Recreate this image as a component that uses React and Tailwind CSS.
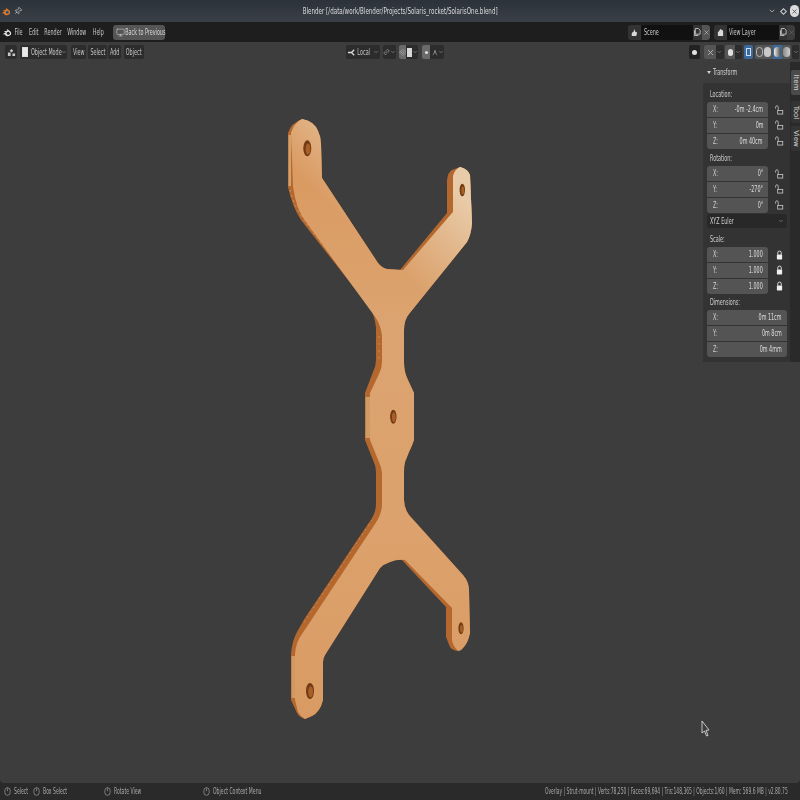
import { ChevronDown, X, Link2, Magnet, Monitor, Pin, Mouse } from "lucide-react";

// text in the shot is squeezed horizontally, so every label gets an x scale
function T({ children, className = "", title }) {
  return <span className={`inline-block shrink-0 whitespace-nowrap font-['DejaVu_Sans',sans-serif] leading-none ${title ? "scale-x-[0.62]" : "scale-x-[0.54]"} ${className}`}>{children}</span>;
}

function Logo({ color, eye, className }) {
  return (
    <svg viewBox="0 0 12 12" className={className}>
      <path d="M0.5 7.5 L4 5.2 L1.5 5 L2 4 L6 4 L4.6 2.6 L6 1.8 L9.5 4.2 C11.5 5.6 11.5 9 8.6 10.4 C6 11.6 3 10.6 2.6 8.2 L1 9 Z" fill={color} />
      <circle cx="7" cy="7" r="2" fill={eye} />
    </svg>
  );
}

function CopyIcon() {
  return (
    <svg viewBox="0 0 8 10" className="h-[10px] w-[7px]">
      <path d="M1.5 1 L5 1 L7 3 L7 7.5 L1.5 7.5 Z M0.5 3 L0.5 9 L5 9" stroke="#dcdcdc" strokeWidth="0.9" fill="none" />
    </svg>
  );
}

function LockIcon({ locked }) {
  if (locked) {
    return (
      <svg viewBox="0 0 8 11" className="h-[10px] w-[7px]">
        <path d="M2 5 L2 3 Q2 1 4 1 Q6 1 6 3 L6 5" stroke="#f0f0f0" strokeWidth="1" fill="none" />
        <rect x="1" y="5" width="6" height="5.5" rx="0.6" fill="#f0f0f0" />
      </svg>
    );
  }
  return (
    <svg viewBox="0 0 10 11" className="h-[10px] w-[9px]">
      <path d="M0.6 4 L0.6 2.6 Q0.6 0.8 2.2 0.8 Q3.6 0.8 3.6 2.6 L3.6 6" stroke="#c8c8c8" strokeWidth="0.9" fill="none" />
      <rect x="3" y="6" width="5.6" height="4" stroke="#c8c8c8" strokeWidth="0.9" fill="none" />
    </svg>
  );
}

function Menu({ w, label }) {
  return (
    <div className={`flex justify-center ${w}`}>
      <T className="text-[9px] text-[#c8c8c8] origin-center">{label}</T>
    </div>
  );
}

function HeadBtn({ w, label, children }) {
  return (
    <div className={`flex h-[14px] items-center justify-center rounded-[2px] bg-[#2c2c2c] ${w}`}>
      {children}
      {label && <T className="text-[9px] text-[#c4c4c4] origin-center">{label}</T>}
    </div>
  );
}

function Caret() {
  return <ChevronDown size={6} strokeWidth={2} className="shrink-0 text-[#a8a8a8]" />;
}

function Field({ axis, value, first, last }) {
  return (
    <div className={`flex h-[15px] items-center bg-[#545454] pl-[6px] pr-[5px] ${first ? "rounded-t-[3px]" : ""} ${last ? "rounded-b-[3px]" : "mb-px"}`}>
      <div className="flex w-[6px]">
        <T className="text-[9px] text-[#d0d0d0] origin-left">{axis}</T>
      </div>
      <div className="flex min-w-0 flex-1 justify-end">
        <T className="text-[9px] text-[#dedede] origin-right">{value}</T>
      </div>
    </div>
  );
}

function Group({ rows, locked, wide }) {
  return (
    <div className="flex">
      <div className={wide ? "w-[80px]" : "w-[61px]"}>
        {rows.map((r, i) => (
          <Field key={r[0]} axis={r[0]} value={r[1]} first={i === 0} last={i === 2} />
        ))}
      </div>
      {!wide && (
        <div className="ml-[5px] flex w-[12px] flex-col justify-around">
          {rows.map((r) => (
            <div key={r[0]} className="flex h-[15px] items-center justify-center">
              <LockIcon locked={locked} />
            </div>
          ))}
        </div>
      )}
    </div>
  );
}

function Label({ text, className }) {
  return (
    <div className={`flex h-[10px] items-center pl-[3px] ${className}`}>
      <T className="text-[9px] text-[#d0d0d0] origin-left">{text}</T>
    </div>
  );
}

function SideTab({ label, className }) {
  return (
    <div className={`flex w-[9px] items-center justify-center rounded-l-[2px] ${className}`}>
      <span className="inline-block shrink-0 rotate-90 whitespace-nowrap font-['DejaVu_Sans',sans-serif] text-[7px] leading-none text-[#d8d8d8]">{label}</span>
    </div>
  );
}

function Sphere({ className }) {
  return <div className={`h-[10px] w-[7px] rounded-full ${className}`} />;
}

function StatusItem({ w, label }) {
  return (
    <div className={`flex items-center ${w}`}>
      <Mouse size={9} strokeWidth={1.5} className="shrink-0 text-[#b8b8b8]" />
      <T className="ml-[2px] text-[8.5px] text-[#a8a8a8] origin-left">{label}</T>
    </div>
  );
}

// right hand outline is shared by the silhouette and the face down to the lower lug
const UPPER_RIGHT =
  "Q314 121 318 131 Q321 137 321 144 L322 178 L378 263 Q382 268 387 269 L";
const MIDDLE_RIGHT =
  "Q468 169 470 175 L472 223 Q471 235 467 242 L409 314 Q404 320 404 330 L404 362 Q404 372 408 380 L414 393 L414 440 Q412 446 409 452 L405 462 Q404 466 404 472 L404 500 Q404 508 409 515 L463 575 Q469 582 469 590 L470 633 Q468 643 463 648 Q461 651 458 651";
const LOWER_INNER = "Q397 559 390 562 Q384 564 380 568 L325 655 Q323 658 323 662 L323 700 Q320 712 312 716 L305 719";

const OUTLINE = `M288 133 Q291 123 302 119 ${UPPER_RIGHT}400 270 L447 213 L447 180 Q448 172 452 170 L460 167 ${MIDDLE_RIGHT} Q452 650 450 647 L446 637 L446 607 L402 560 ${LOWER_INNER} Q299 717 297 713 L291 700 L291 654 Q292 641 297 632 L305 618 L368 524 Q376 514 376 504 L376 472 Q376 466 373 460 L365 440 L365 393 L373 372 Q376 366 376 360 L376 328 Q375 316 370 308 L301 220 Q292 206 288 187 Z`;

const FACE = `M291 133 Q294 123 302 119 ${UPPER_RIGHT}403 270 L453 212 L453 177 Q454 170 460 167 ${MIDDLE_RIGHT} Q453 646 452 640 L452 608 L405 560 ${LOWER_INNER} Q301 717 298 712 L295 700 L295 654 Q296 642 302 634 L310 622 L375 524 Q382 514 382 504 L382 474 Q382 468 379 462 L370 440 L370 393 L379 374 Q382 368 382 362 L382 336 Q381 326 376 318 L306 222 Q296 210 293 186 Z`;

function Strut() {
  return (
    <svg viewBox="0 0 800 800" className="absolute left-0 top-[-42px] h-[800px] w-[800px]">
      <defs>
        <linearGradient id="face" gradientUnits="userSpaceOnUse" x1="390" y1="120" x2="390" y2="720">
          <stop offset="0" stopColor="#d9975d" />
          <stop offset="0.35" stopColor="#dca470" />
          <stop offset="0.7" stopColor="#dca16c" />
          <stop offset="1" stopColor="#d99b63" />
        </linearGradient>
        <linearGradient id="sheen" gradientUnits="userSpaceOnUse" x1="405" y1="275" x2="470" y2="205">
          <stop offset="0" stopColor="#e8cba8" stopOpacity="0" />
          <stop offset="1" stopColor="#e8cba8" stopOpacity="1" />
        </linearGradient>
        <filter id="soft">
          <feGaussianBlur stdDeviation="0.5" />
        </filter>
      </defs>
      <g filter="url(#soft)">
        {/* silhouette, shows as the cut edge of the plate */}
        <path fill="#b5682f" d={OUTLINE} />
        {/* light worn patches and grain on the edge */}
        <path fill="#d3a06f" d="M288.5 135 L291 135 L291 186 L288.5 186 Z" />
        <path fill="#cf9a66" d="M365.5 397 L370 397 L370 438 L365.5 438 Z" />
        <path fill="#cf9a66" d="M291.5 656 L295 656 L295 698 L291.5 698 Z" />
        <path d="M290 190 Q294 206 303 219 L372 310 L379 322" stroke="#d49a63" strokeWidth="1" strokeDasharray="1.5 4" fill="none" />
        <path d="M372 520 L304 622" stroke="#d08c50" strokeWidth="1" strokeDasharray="1.5 4" fill="none" />
        <path d="M379 336 L379 362" stroke="#c98a52" strokeWidth="1" strokeDasharray="2 5" fill="none" />
        {/* plate face */}
        <path fill="url(#face)" d={FACE} />
        <path fill="url(#sheen)" d={FACE} />
        {/* mounting holes */}
        <ellipse cx="307.3" cy="148.3" rx="4" ry="8" fill="#6f3a14" />
        <ellipse cx="308" cy="149" rx="2.4" ry="5.6" fill="#a85f27" />
        <ellipse cx="462.3" cy="190" rx="2.7" ry="6.3" fill="#6f3a14" />
        <ellipse cx="462.8" cy="190.6" rx="1.5" ry="4" fill="#a85f27" />
        <ellipse cx="393.3" cy="416.7" rx="3.2" ry="7" fill="#6f3a14" />
        <ellipse cx="393.8" cy="417.3" rx="1.9" ry="4.8" fill="#a85f27" />
        <ellipse cx="461" cy="628.3" rx="2.6" ry="6" fill="#6f3a14" />
        <ellipse cx="461.5" cy="628.9" rx="1.4" ry="3.8" fill="#a85f27" />
        <ellipse cx="310" cy="691" rx="4" ry="8" fill="#6f3a14" />
        <ellipse cx="310.6" cy="691.8" rx="2.4" ry="5.6" fill="#a85f27" />
      </g>
      {/* mouse cursor */}
      <path d="M702 721 L702 733 L704.5 731 L706.5 736 L708 735.4 L706 730.4 L709 730 Z" fill="#3d3d3d" stroke="#e8e8e8" strokeWidth="0.8" />
    </svg>
  );
}

export default function App() {
  return (
    <div className="flex h-[800px] w-[800px] flex-col overflow-hidden bg-[#2a2a2a]">
      {/* Window title */}
      <div className="flex h-[22px] shrink-0 items-center bg-gradient-to-b from-[#2b323a] to-[#3b4048] pl-[2px] pr-[1px]">
        <Logo color="#ec7a1c" eye="#24528c" className="h-[11px] w-[9px]" />
        <Pin size={8} strokeWidth={2} className="ml-[3px] rotate-45 text-[#d8d8d8]" />
        <div className="flex flex-1 justify-center pl-[10px]">
          <T title className="text-[9px] text-[#dcdcdc] origin-center">Blender [/data/work/Blender/Projects/Solaris_rocket/SolarisOne.blend]</T>
        </div>
        <ChevronDown size={8} strokeWidth={2} className="text-[#d0d0d0]" />
        <div className="ml-[5px] h-[5px] w-[5px] rotate-45 border border-[#d0d0d0]" />
        <div className="ml-[4px] flex h-[12px] w-[9px] items-center justify-center rounded-full bg-[#dcdcdc]">
          <X size={7} strokeWidth={2.5} className="text-[#3a3f46]" />
        </div>
      </div>

      {/* Top bar */}
      <div className="flex h-[20px] shrink-0 items-center bg-[#1e1e1e] pl-[3px]">
        <Logo color="#e0e0e0" eye="#1e1e1e" className="h-[11px] w-[9px]" />
        <Menu w="ml-[2px] w-[10px]" label="File" />
        <Menu w="ml-[5px] w-[10px]" label="Edit" />
        <Menu w="ml-[5px] w-[18px]" label="Render" />
        <Menu w="ml-[5px] w-[20px]" label="Window" />
        <Menu w="ml-[5px] w-[12px]" label="Help" />
        <div className="ml-[9px] flex h-[15px] w-[52px] items-center rounded-[3px] bg-[#555555] pl-[3px]">
          <Monitor size={9} strokeWidth={1.5} className="shrink-0 text-[#d0d0d0]" />
          <div className="flex w-[40px] justify-center">
            <T className="text-[9px] text-[#d8d8d8] origin-center">Back to Previous</T>
          </div>
        </div>
        <div className="flex-1" />
        {/* Scene */}
        <div className="flex h-[15px] w-[82px] items-center">
          <div className="flex h-full w-[13px] items-center justify-center rounded-l-[3px] bg-[#333333]">
            <svg viewBox="0 0 8 10" className="h-[9px] w-[7px]">
              <path d="M1 9 Q0 5 3 4 L3.5 1 L5 4 L7 5 L6 9 Z" fill="#d8d8d8" />
            </svg>
          </div>
          <div className="flex h-full w-[52px] items-center bg-[#111111] pl-[3px]">
            <T className="text-[9px] text-[#c8c8c8] origin-left">Scene</T>
          </div>
          <div className="flex h-full w-[9px] items-center justify-center bg-[#333333]">
            <CopyIcon />
          </div>
          <div className="flex h-full w-[8px] items-center justify-center rounded-r-[3px] bg-[#545454]">
            <X size={7} strokeWidth={2} className="text-[#c8c8c8]" />
          </div>
        </div>
        {/* View layer */}
        <div className="ml-[4px] mr-[5px] flex h-[15px] w-[81px] items-center">
          <div className="flex h-full w-[13px] items-center justify-center rounded-l-[3px] bg-[#333333]">
            <svg viewBox="0 0 8 10" className="h-[9px] w-[7px]">
              <path d="M1 9 L1 5 L4 1 L7 3 L7 9 Z" fill="#d8d8d8" />
            </svg>
          </div>
          <div className="flex h-full w-[52px] items-center bg-[#111111] pl-[2px]">
            <T className="text-[9px] text-[#c8c8c8] origin-left">View Layer</T>
          </div>
          <div className="flex h-full w-[8px] items-center justify-center bg-[#333333]">
            <CopyIcon />
          </div>
          <div className="flex h-full w-[8px] items-center justify-center rounded-r-[3px] bg-[#3c3c3c]">
            <X size={7} strokeWidth={2} className="text-[#6a6a6a]" />
          </div>
        </div>
      </div>

      {/* 3D viewport */}
      <div className="relative min-h-0 flex-1 overflow-hidden rounded-b-[4px] bg-[#3d3d3d]">
        <Strut />

        {/* Viewport header */}
        <div className="relative flex h-[20px] items-center pl-[5px]">
          <HeadBtn w="w-[12px]">
            <svg viewBox="0 0 10 10" className="h-[9px] w-[9px]">
              <path d="M5 1 L7 3 L5 5 L3 3 Z M1 5 L4 5 L4 9 L1 9 Z M6 6 L9 6 L9 9 L6 9 Z" fill="#c8c8c8" />
            </svg>
          </HeadBtn>
          <div className="ml-[3px] flex h-[14px] w-[47px] items-center rounded-[2px] bg-[#2c2c2c] pl-[2px]">
            <div className="h-[10px] w-[6px] shrink-0 border border-dashed border-[#dcdcdc] bg-[#e8e8e8]" />
            <div className="ml-[3px] flex w-[30px] justify-center">
              <T className="text-[9px] text-[#c8c8c8] origin-center">Object Mode</T>
            </div>
            <Caret />
          </div>
          <HeadBtn w="ml-[4px] w-[15px]" label="View" />
          <HeadBtn w="ml-[2px] w-[19px]" label="Select" />
          <HeadBtn w="ml-px w-[13px]" label="Add" />
          <HeadBtn w="ml-[3px] w-[20px]" label="Object" />

          {/* Transform widgets */}
          <div className="ml-[202px] flex h-[14px] w-[34px] items-center rounded-[2px] bg-[#2c2c2c] pl-[1px]">
            <svg viewBox="0 0 10 10" className="h-[9px] w-[9px] shrink-0">
              <path d="M1 5 L5 5 M5 5 L8 2 M5 5 L8 8" stroke="#dcdcdc" strokeWidth="1.4" fill="none" />
            </svg>
            <div className="flex w-[15px] justify-center">
              <T className="text-[9px] text-[#c8c8c8] origin-center">Local</T>
            </div>
            <div className="ml-[2px]"><Caret /></div>
          </div>
          <div className="ml-[3px] flex h-[14px] w-[13px] items-center justify-center rounded-[2px] bg-[#2c2c2c]">
            <Link2 size={8} strokeWidth={1.5} className="-rotate-45 text-[#d0d0d0]" />
            <Caret />
          </div>
          <div className="ml-[3px] flex h-[14px] w-[19px] items-center rounded-[2px] bg-[#2c2c2c]">
            <div className="flex h-full w-[8px] items-center justify-center rounded-l-[2px] bg-[#6a6a6a]">
              <Magnet size={7} strokeWidth={1.5} className="text-[#c0c0c0]" />
            </div>
            <div className="ml-px h-[9px] w-[5px] bg-[#d8d8d8]" />
            <Caret />
          </div>
          <div className="ml-[4px] flex h-[14px] w-[22px] items-center rounded-[2px] bg-[#2c2c2c]">
            <div className="flex h-full w-[8px] items-center justify-center rounded-l-[2px] bg-[#6a6a6a]">
              <div className="h-[3px] w-[3px] rounded-full bg-[#e0e0e0]" />
            </div>
            <svg viewBox="0 0 8 8" className="ml-[2px] h-[7px] w-[6px]">
              <path d="M1 7 Q3 7 4 1 Q5 7 7 7" stroke="#a8a8a8" strokeWidth="1" fill="none" />
            </svg>
            <Caret />
          </div>

          {/* Display widgets */}
          <div className="ml-[245px] flex h-[14px] w-[11px] items-center justify-center rounded-[2px] bg-[#222222]">
            <div className="h-[5px] w-[5px] rounded-full bg-[#e0e0e0]" />
          </div>
          <div className="ml-[4px] flex h-[14px] w-[20px] items-center rounded-[2px] bg-[#2c2c2c]">
            <div className="flex h-full w-[12px] items-center justify-center rounded-l-[2px] bg-[#555555]">
              <X size={9} strokeWidth={2} className="text-[#c8c8c8]" />
            </div>
            <Caret />
          </div>
          <div className="ml-px flex h-[14px] w-[17px] items-center rounded-[2px] bg-[#2c2c2c]">
            <div className="flex h-full w-[10px] items-center justify-center rounded-l-[2px] bg-[#555555]">
              <div className="h-[7px] w-[5px] rounded-full bg-[#e0e0e0]" />
            </div>
            <Caret />
          </div>
          <div className="ml-[2px] flex h-[14px] w-[9px] items-center justify-center rounded-[2px] bg-[#3d6a9c]">
            <div className="h-[8px] w-[5px] border border-[#cfe0f2]" />
          </div>
          <div className="ml-[2px] flex h-[14px] w-[36px] items-center justify-around rounded-[2px] bg-[#555555]">
            <Sphere className="border border-[#b8b8b8]" />
            <Sphere className="bg-[#c8c8c8]" />
            <div className="flex h-full w-[9px] items-center justify-center bg-[#3d6a9c]">
              <Sphere className="bg-gradient-to-r from-[#f0f0f0] to-[#4a4a4a]" />
            </div>
            <Sphere className="bg-gradient-to-r from-[#8a8a8a] to-[#d0d0d0]" />
          </div>
          <div className="ml-px flex h-[14px] w-[7px] items-center justify-center rounded-[2px] bg-[#2c2c2c]">
            <Caret />
          </div>
        </div>

        {/* Sidebar tabs */}
        <div className="absolute right-0 top-[20px] flex h-[300px] w-[10px] flex-col items-end bg-[#2a2a2a] pt-[8px]">
          <SideTab label="Item" className="h-[25px] bg-[#4a4a4a]" />
          <SideTab label="Tool" className="mt-[6px] h-[22px] bg-[#333333]" />
          <SideTab label="View" className="mt-[3px] h-[25px] bg-[#333333]" />
        </div>

        {/* N panel */}
        <div className="absolute right-[10px] top-[20px] w-[87px] bg-[#333333]">
          <div className="flex h-[21px] items-center bg-[#3c3c3c] pl-[4px]">
            <div className="h-0 w-0 border-x-[2px] border-t-[3px] border-x-transparent border-t-[#d0d0d0]" />
            <T className="ml-[2px] text-[9px] text-[#d4d4d4] origin-left">Transform</T>
          </div>
          <div className="pb-[5px] pl-[4px]">
            <Label text="Location:" className="mt-[6px]" />
            <div className="mt-[3px]"><Group rows={[["X:", "-0m -2.4cm"], ["Y:", "0m"], ["Z:", "0m 40cm"]]} /></div>
            <Label text="Rotation:" className="mt-[4px]" />
            <div className="mt-[3px]"><Group rows={[["X:", "0°"], ["Y:", "-270°"], ["Z:", "0°"]]} /></div>
            <div className="mt-px flex h-[14px] w-[80px] items-center justify-between rounded-[3px] bg-[#282828] px-[3px]">
              <T className="text-[9px] text-[#d0d0d0] origin-left">XYZ Euler</T>
              <Caret />
            </div>
            <Label text="Scale:" className="mt-[6px]" />
            <div className="mt-[3px]"><Group locked rows={[["X:", "1.000"], ["Y:", "1.000"], ["Z:", "1.000"]]} /></div>
            <Label text="Dimensions:" className="mt-[3px]" />
            <div className="mt-[3px]"><Group wide rows={[["X:", "0m 11cm"], ["Y:", "0m 8cm"], ["Z:", "0m 4mm"]]} /></div>
          </div>
        </div>
      </div>

      {/* Status bar */}
      <div className="flex h-[17px] shrink-0 items-center bg-[#2a2a2a] pl-[3px] pr-[12px]">
        <StatusItem w="w-[29px]" label="Select" />
        <StatusItem w="w-[71px]" label="Box Select" />
        <StatusItem w="w-[99px]" label="Rotate View" />
        <StatusItem w="w-[100px]" label="Object Context Menu" />
        <div className="flex flex-1 justify-end">
          <T className="text-[8.25px] text-[#a8a8a8] origin-right">Overlay | Strut-mount | Verts:78,250 | Faces:69,694 | Tris:148,365 | Objects:1/60 | Mem: 569.6 MB | v2.80.75</T>
        </div>
      </div>
    </div>
  );
}
